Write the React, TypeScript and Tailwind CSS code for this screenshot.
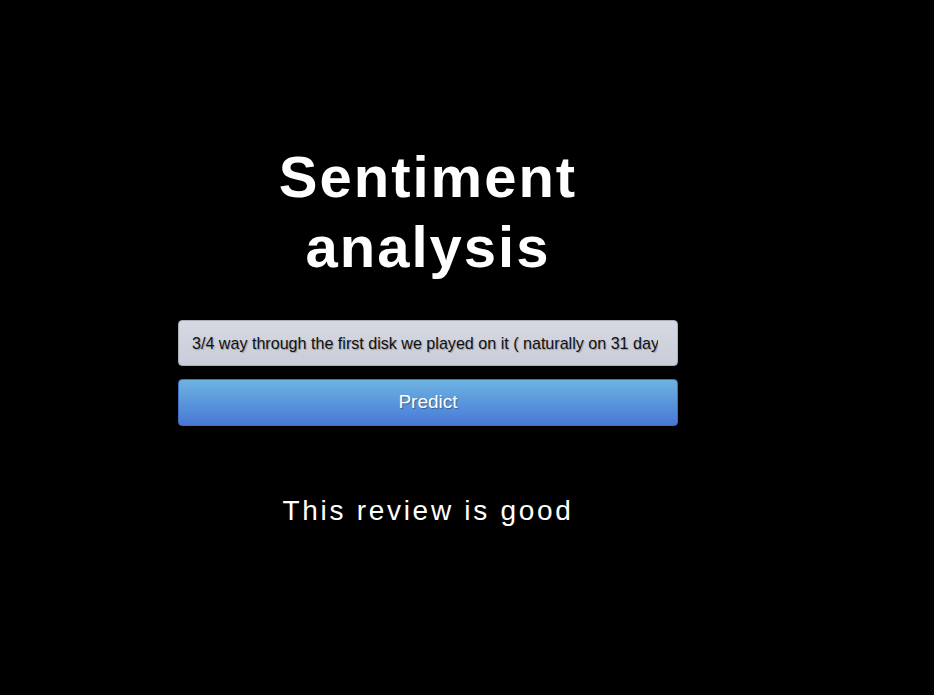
import React from "react";

export default function App() {
  return (
    <div
      className="min-h-[695px] w-full bg-black text-white"
      style={{ fontFamily: '"Liberation Sans", Arial, sans-serif' }}
    >
      <div className="flex flex-col w-[500px] ml-[178px] pt-[142px]">
        <h1 className="text-center text-[58px] leading-[70px] font-bold tracking-[2px] text-white">
          Sentiment analysis
        </h1>
        <input
          readOnly
          value="3/4 way through the first disk we played on it ( naturally on 31 days to go before our trip ) the game froze"
          className="mt-[38px] h-[46px] rounded-[4px] border border-[#a9adb8] bg-gradient-to-b from-[#d6d9e2] to-[#c9cdd8] pl-[13px] pr-[19px] text-[16.1px] text-[#111] outline-none [text-shadow:1px_1px_1px_rgba(0,0,0,0.25)]"
          style={{ fontFamily: '"Liberation Sans", Arial, sans-serif' }}
        />
        <button className="mt-[13px] h-[47px] rounded-[4px] border border-[#3f6fc4] bg-gradient-to-b from-[#6db3e2] to-[#4a78d5] text-[19px] text-white [text-shadow:1px_1px_1px_rgba(0,0,0,0.35)]">
          Predict
        </button>
        <p className="mt-[64px] text-center text-[28px] tracking-[2.7px] text-white">
          This review is good
        </p>
      </div>
    </div>
  );
}
